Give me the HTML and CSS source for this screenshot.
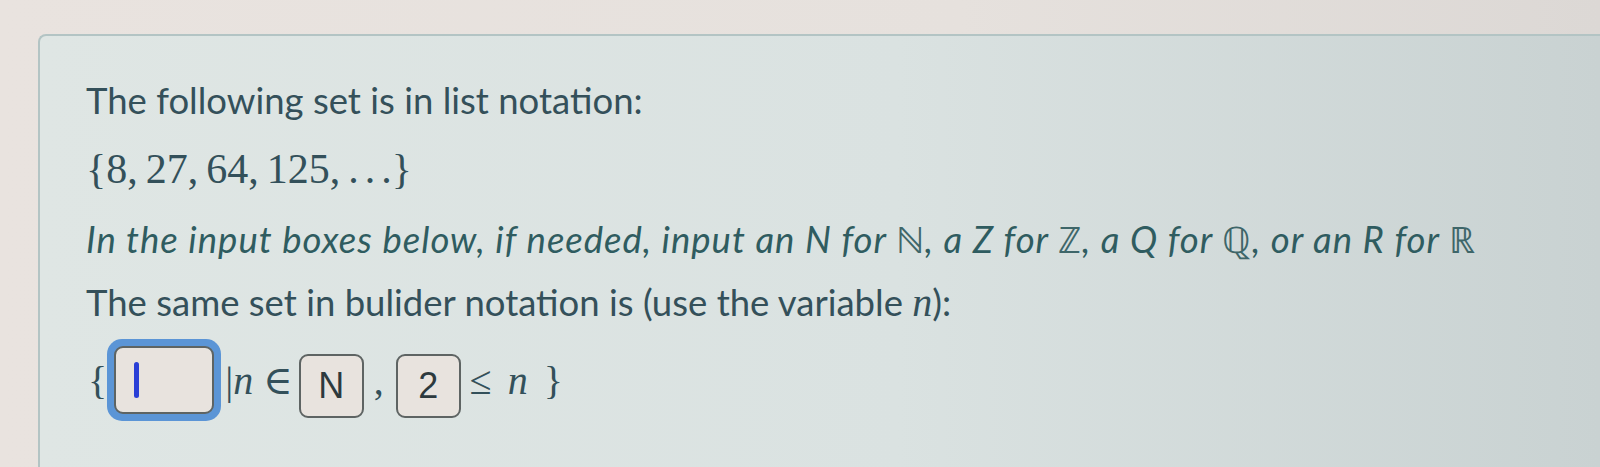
FILE: index.html
```html
<!DOCTYPE html>
<html>
<head>
<meta charset="utf-8">
<link rel="stylesheet" href="styles.css">
</head>
<body>
<div class="page">
  <div class="card">
    <p class="line t1">The following set is in list notation:</p>
    <p class="math list">{8,<span class="sp"></span>27,<span class="sp"></span>64,<span class="sp"></span>125,<span class="sp"></span>.<span class="dot"></span>.<span class="dot"></span>.}</p>
    <p class="line hint">In the input boxes below, if needed, input an N for <span class="bb">ℕ</span>, a Z for <span class="bb">ℤ</span>, a Q for <span class="bb">ℚ</span>, or an R for <span class="bb">ℝ</span></p>
    <p class="line t4">The same set in bulider notation is (use the variable <span class="mi">n</span>):</p>
    <div class="row">
      <span class="math brace">{</span>
      <span class="focus"><span class="box big"><span class="caret"></span></span></span>
      <span class="math rel">|<span class="mi">n</span> ∈</span>
      <span class="box sm">N</span>
      <span class="math comma">,</span>
      <span class="box sm">2</span>
      <span class="math rel2">≤ <span class="mi">n</span> }</span>
    </div>
  </div>
</div>
</body>
</html>
```

FILE: styles.css
```css
html, body {
  margin: 0;
  padding: 0;
}
body {
  width: 1600px;
  height: 467px;
  overflow: hidden;
  background: linear-gradient(90deg, #e9e3df 0%, #e6e1dd 60%, #dcd8d5 100%);
}
.page {
  padding: 34px 0 0 38px;
}
.card {
  height: 433px;
  border: 2px solid #b3c4c4;
  border-right: none;
  border-bottom: none;
  border-radius: 8px 0 0 0;
  background: linear-gradient(90deg, #dfe6e4 0%, #dae2e1 55%, #c9d2d2 100%);
  padding: 42px 0 0 46px;
  box-sizing: border-box;
  font-family: Lato, "Open Sans", sans-serif;
  color: #34505a;
}
p {
  margin: 0;
}
.line {
  font-size: 36.5px;
  line-height: 44px;
}
.math {
  font-family: "Liberation Serif", "DejaVu Serif", serif;
  font-size: 42px;
  color: #33505a;
}
.list {
  margin-top: 23px;
  line-height: 48px;
}
.sp {
  display: inline-block;
  width: 8px;
}
.dot {
  display: inline-block;
  width: 6px;
}
.hint {
  margin-top: 24px;
  font-style: italic;
  letter-spacing: 1px;
  color: #2f5c60;
}
.bb {
  font-style: normal;
  font-family: "DejaVu Sans", sans-serif;
  font-weight: 300;
  color: #3e6669;
}
.t4 {
  margin-top: 17px;
}
.mi {
  font-family: "Liberation Serif", serif;
  font-style: italic;
  font-size: 40px;
}
.row {
  margin-top: 12px;
  display: flex;
  align-items: center;
  height: 86px;
}
.row .math {
  font-size: 40px;
}
.brace {
  margin-left: 2px;
  margin-right: 0;
}
.focus {
  display: flex;
  padding: 7px;
  border-radius: 15px;
  background: #5b95d6;
}
.box {
  box-sizing: border-box;
  display: flex;
  align-items: center;
  justify-content: center;
  border: 2px solid #5e6463;
  border-radius: 9px;
  background: #e8e3de;
  font-family: "Liberation Sans", Arial, sans-serif;
  font-size: 36px;
  color: #2d3a3e;
}
.big {
  width: 100px;
  height: 68px;
  justify-content: flex-start;
  padding-left: 18px;
}
.caret {
  width: 5px;
  height: 36px;
  border-radius: 3px;
  background: #2a3fd6;
}
.sm {
  width: 65px;
  height: 64px;
  margin-top: 12px;
}
.rel {
  margin: 0 6px 0 4px;
}
.comma {
  margin: 0 12px 0 10px;
}
.rel2 {
  margin-left: 9px;
  word-spacing: 6px;
}
```
